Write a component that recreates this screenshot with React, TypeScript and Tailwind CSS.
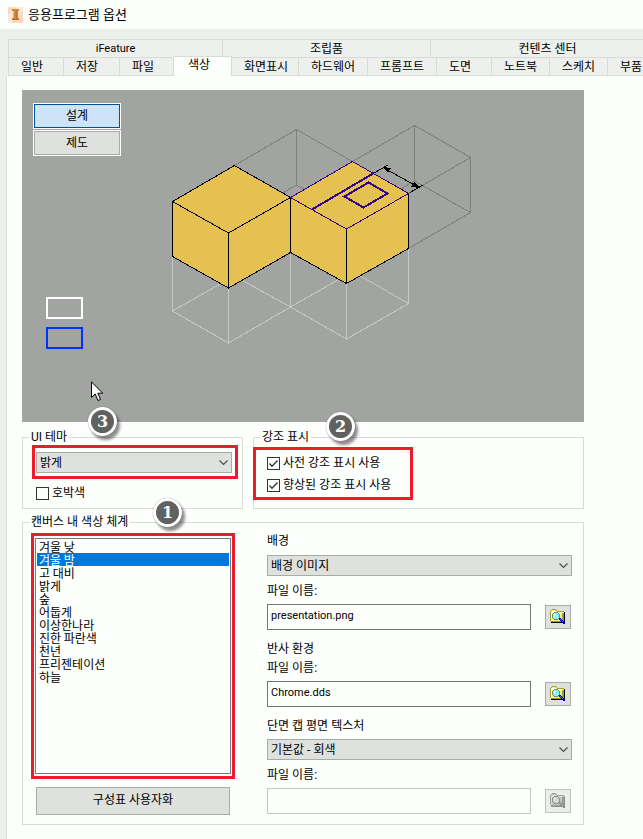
import { ReactNode, useState } from 'react';
import { clsx } from 'clsx';

const groupTabs = [
  { label: 'iFeature', width: 'w-[214px]' },
  { label: '조립품', width: 'w-[208px]' },
  { label: '컨텐츠 센터', width: 'w-[234px]' },
];

const tabs = [
  { label: '일반', width: 'w-[55px]' },
  { label: '저장', width: 'w-[56px]' },
  { label: '파일', width: 'w-[54px]' },
  { label: '색상', width: 'w-[58px]' },
  { label: '화면표시', width: 'w-[67px]' },
  { label: '하드웨어', width: 'w-[69px]' },
  { label: '프롬프트', width: 'w-[69px]' },
  { label: '도면', width: 'w-[55px]' },
  { label: '노트북', width: 'w-[58px]' },
  { label: '스케치', width: 'w-[58px]' },
  { label: '부품', width: 'w-[56px]' },
];

const schemes = [
  '겨울 낮',
  '겨울 밤',
  '고 대비',
  '밝게',
  '숲',
  '어둡게',
  '이상한나라',
  '진한 파란색',
  '천년',
  '프리젠테이션',
  '하늘',
];

function AppLogo() {
  return (
    <svg width="16" height="16" viewBox="0 0 16 16" aria-hidden="true">
      <rect width="15" height="16" rx="1" fill="#fad9c0" />
      <path d="M0 8 L8 0 H15 V3 L3 16 H0Z" fill="#fce8d9" />
      <path d="M4 2H11V4H9.500V11H11V13H4V11H5.500V4H4Z" fill="#d98232" />
      <path d="M8.500 4H9.500V11H8.500Z" fill="#a85a1c" />
      <path d="M4 12H11V13H4Z" fill="#b9651f" />
    </svg>
  );
}

function Badge({ value, className }: { value: number; className: string }) {
  return (
    <span
      className={clsx(
        'absolute z-10 flex h-[29px] w-[29px] items-center justify-center rounded-full border-[3px] border-white bg-[#60625f] font-["DejaVu_Serif",serif] text-base leading-4 font-bold text-white shadow-[3px_4px_3px_rgba(0,0,0,0.45),0_0_1px_rgba(0,0,0,0.5)]',
        className,
      )}
    >
      {value}
    </span>
  );
}

function FolderIcon({ muted }: { muted?: boolean }) {
  const folder = muted ? '#c4c6c4' : '#fbf56a';
  const light = muted ? '#dddfdd' : '#fffff0';
  const shade = muted ? '#9c9e9c' : '#a09a28';
  const edge = muted ? '#8e908e' : '#000000';
  const lens = muted ? '#d0d2d0' : '#7df4fa';
  const rim = muted ? '#8e908e' : '#5d8f93';
  const handle = muted ? '#8a8c8a' : '#0000a8';
  return (
    <svg width="16" height="16" viewBox="0 0 16 16" shapeRendering="crispEdges" aria-hidden="true">
      <path d="M1 2H2V1H6V2H7V3H14V13H1Z" fill={folder} />
      <path d="M2 2H6V3H13V4H2V12H1V2Z" fill={light} />
      <path d="M0 2H1V12H0ZM1 1H2V2H1ZM2 0H6V1H2ZM6 1H7V2H6ZM7 2H14V3H7Z" fill={shade} />
      <path d="M12 4H14V13H12ZM1 12H13V13H1Z" fill={shade} />
      <path d="M14 3H15V14H14ZM1 13H14V14H1Z" fill={edge} />
      <path d="M4 4H8V5H9V9H8V10H4V9H3V5H4Z" fill={lens} />
      <path d="M4 5H6V6H5V8H4ZM7 8H8V9H7Z" fill={muted ? '#f0f0f0' : '#ffffff'} />
      <path
        d="M4 3H8V4H4ZM3 4H4V5H3ZM8 4H9V5H8ZM2 5H3V9H2ZM9 5H10V9H9ZM3 9H4V10H3ZM4 10H8V11H4ZM8 9H9V10H8Z"
        fill={rim}
      />
      <path d="M9 9H11V10H12V11H13V12H14V13H15V15H13V14H12V13H11V12H10V11H9Z" fill={handle} />
      <path d="M10 10H11V11H12V12H13V13H12V12H11V11H10Z" fill={muted ? '#b0b2b0' : '#4a6cff'} />
    </svg>
  );
}

function CubePreview() {
  return (
    <svg
      width="300"
      height="220"
      viewBox="0 0 300 220"
      fill="none"
      shapeRendering="crispEdges"
      className="mt-[35px] shrink-0"
      aria-hidden="true"
    >
      {/* hidden edges behind the solids */}
      <g stroke="#7f817f">
        <path d="M62.500 40.500L124.500 4.500L180.500 36.500L242.500 .5L298.500 32.500L236.500 68.500" />
        <path d="M124.500 4.500V60L62.500 96M124.500 60L180.500 92" />
        <path d="M242.500 .5V56L180.500 92M242.500 56L298.500 87.500V32.500M298.500 87.500L236.500 123.500" />
      </g>
      <g stroke="#c6c8c6">
        <path d="M.5 131V186L56.500 218L118.500 182L174.500 214L236.500 178.500V123" />
        <path d="M56.500 163V218M118.500 127V182M174.500 158V214" />
        <path d="M.5 186L62.500 151L118.500 182L180.500 146.500L236.500 178.500" />
      </g>

      <g fill="#e5c152" stroke="#000">
        <path d="M.5 76.500L62.500 40.500L118.500 72.500V127.500L56.500 163L.5 131.500Z" />
        <path d="M118.500 72.500L180.500 36.500L236.500 68.500V123.500L174.500 158.500L118.500 127.500Z" />
      </g>
      <path d="M.5 76.500L56.500 108L118.500 72.500M56.500 108V163M174.500 104V158" stroke="#000" />
      <path d="M118.500 72.500L180.500 36.500L236.500 68.500L174.500 104Z" stroke="#e5c152" />
      <path d="M118.500 72.500L180.500 36.500L236.500 68.500L174.500 104Z" stroke="#330088" />

      <g stroke="#330088" strokeWidth="2">
        <path d="M140 84.500L202 48" />
        <path d="M196.500 57.500L215.500 68.500L191.500 82.500L172.500 71.500Z" />
      </g>

      <path d="M202 48L216 40M238 67.500L251 60M211 42.500L247 62.500" stroke="#000" />
      <path d="M211 42L219 43L216 48ZM248 63L239 62L242 57Z" fill="#000" />
    </svg>
  );
}

function Cursor() {
  return (
    <svg width="13" height="21" viewBox="0 0 13 21" className="absolute top-[291px] left-[69px]" aria-hidden="true">
      <path d="M.5 1V16.500L4.200 13L7 19.500L9.500 18.400L6.800 12.200H11.800Z" fill="#fff" stroke="#000" />
    </svg>
  );
}

function Group({ title, className, children }: { title: string; className?: string; children: ReactNode }) {
  return (
    <fieldset className={clsx('h-full min-w-0 border border-[#d9dbd9]', className)}>
      <legend className="ml-1.5 px-0.5 leading-4">{title}</legend>
      {children}
    </fieldset>
  );
}

function Dropdown({ id, label, options }: { id: string; label?: string; options: string[] }) {
  return (
    <div className="relative">
      <select
        id={id}
        aria-label={label}
        className="block h-[21px] w-full appearance-none border border-[#a9aba9] bg-[#dfe1df] pr-6 pl-[3px] leading-[18px] outline-none"
      >
        {options.map((o) => (
          <option key={o}>{o}</option>
        ))}
      </select>
      <svg
        width="9"
        height="6"
        viewBox="0 0 9 6"
        fill="none"
        stroke="#4c4e4c"
        className="pointer-events-none absolute top-2 right-1"
        aria-hidden="true"
      >
        <path d="M.5 .5L4.500 4.500L8.500 .5" strokeWidth="1.200" />
      </svg>
    </div>
  );
}

function CheckOption({ label, initial }: { label: string; initial: boolean }) {
  const [checked, setChecked] = useState(initial);
  return (
    <label className="flex h-[13px] items-center gap-[3px] leading-[13px]">
      <span className="relative h-[13px] w-[13px] shrink-0">
        <input
          type="checkbox"
          checked={checked}
          onChange={(e) => setChecked(e.target.checked)}
          className="block h-[13px] w-[13px] appearance-none border border-[#333533] bg-[#fdfffd]"
        />
        {checked && (
          <svg
            width="13"
            height="13"
            viewBox="0 0 13 13"
            fill="none"
            stroke="#333533"
            className="pointer-events-none absolute inset-0"
            aria-hidden="true"
          >
            <path d="M2.500 6.500L5 9.200L10.500 3.500" strokeWidth="1.300" />
          </svg>
        )}
      </span>
      {label}
    </label>
  );
}

function FileField({ id, value, disabled }: { id: string; value: string; disabled?: boolean }) {
  return (
    <>
      <label htmlFor={id} className="leading-4">
        파일 이름:
      </label>
      <div className="mt-[5px] flex items-center gap-3.5 pr-px">
        <input
          id={id}
          type="text"
          defaultValue={value}
          disabled={disabled}
          className={clsx(
            'h-[26px] min-w-0 flex-1 border bg-[#fdfffd] px-[3px] pb-1 text-[11px] outline-none',
            disabled ? 'border-[#c6c8c6]' : 'border-[#747674]',
          )}
        />
        <button
          type="button"
          disabled={disabled}
          aria-label="찾아보기"
          className={clsx(
            'flex h-6 w-[26px] items-center justify-center border',
            disabled ? 'border-[#bfc1bf] bg-[#eceeec]' : 'border-[#a9aba9] bg-[#dfe1df]',
          )}
        >
          <FolderIcon muted={disabled} />
        </button>
      </div>
    </>
  );
}

export default function App() {
  const [activeTab, setActiveTab] = useState('색상');
  const [mode, setMode] = useState('설계');
  const [scheme, setScheme] = useState('겨울 밤');

  return (
    <div className="flex min-h-screen flex-col overflow-hidden bg-[#eef0ee] font-[Roboto,'Noto_Sans_CJK_KR',sans-serif] text-xs text-black">
      <header className="flex h-[29px] items-center gap-1 bg-[#fdfffd] pl-2">
        <AppLogo />
        <h1 className="text-[13px] leading-4">응용프로그램 옵션</h1>
      </header>

      <nav className="pt-2.5 pl-2">
        <div className="flex h-[18px] border-t border-l border-[#d9dbd9]">
          {groupTabs.map((t) => (
            <button
              key={t.label}
              type="button"
              className={clsx('shrink-0 border-r border-[#d9dbd9] leading-4', t.width, t.label === 'iFeature' && 'text-[11px]')}
            >
              {t.label}
            </button>
          ))}
        </div>
        <div className="flex h-[19px] border-y border-l border-[#d9dbd9]">
          {tabs.map((t) => (
            <button
              key={t.label}
              type="button"
              onClick={() => setActiveTab(t.label)}
              className={clsx(
                'shrink-0 border-r border-[#d9dbd9] text-left leading-4',
                t.width,
                activeTab === t.label
                  ? 'z-10 -mt-0.5 -mb-px border-t bg-[#fdfffd] pb-1 pl-3.5'
                  : 'pl-3',
              )}
            >
              {t.label}
            </button>
          ))}
        </div>
      </nav>

      <main className="ml-1.5 flex-1 border-l border-[#d9dbd9] bg-[#fdfffd] pt-3.5 pr-[59px] pb-3.5 pl-[15px]">
        <section className="relative flex h-[332px] bg-[#a2a4a1]">
          <div className="w-[150px] shrink-0 pt-[13px] pl-[11px]">
            <div className="flex w-[88px] flex-col gap-px">
              {['설계', '제도'].map((m) => (
                <button
                  key={m}
                  type="button"
                  onClick={() => setMode(m)}
                  className={clsx(
                    'h-[26px] border border-white pb-px',
                    mode === m
                      ? 'bg-[#cde3f7] shadow-[inset_0_0_0_1px_#00549b]'
                      : 'bg-[#dfe1df] shadow-[inset_0_0_0_1px_#a9aba9]',
                  )}
                >
                  {m}
                </button>
              ))}
            </div>
            <div className="mt-[141px] ml-[13px] flex w-[37px] flex-col gap-2">
              <div className="h-[22px] border-2 border-white" />
              <div className="h-[22px] border-2 border-[#0032ff]" />
            </div>
          </div>
          <CubePreview />
          <Cursor />
        </section>

        <div className="mt-[7px] flex gap-2.5">
          <div className="relative w-[221px] shrink-0">
            <Group title="UI 테마" className="pb-2">
              <div className="mr-1 ml-[9px] border-[3px] border-[#ee1c2a] pt-1 pr-[3px] pb-[3px] pl-px">
                <Dropdown id="theme" label="UI 테마" options={['밝게', '어둡게']} />
              </div>
              <div className="mt-2 ml-[13px]">
                <CheckOption label="호박색" initial={false} />
              </div>
            </Group>
            <Badge value={3} className="-top-[22px] left-[66px]" />
          </div>

          <div className="relative flex-1">
            <Group title="강조 표시">
              <div className="mt-0.5 -ml-px flex w-[160px] flex-col gap-[9px] border-[3px] border-[#ee1c2a] pt-[7px] pb-[5px] pl-[11px]">
                <CheckOption label="사전 강조 표시 사용" initial />
                <CheckOption label="향상된 강조 표시 사용" initial />
              </div>
            </Group>
            <Badge value={2} className="-top-[17px] left-[73px]" />
          </div>
        </div>

        <div className="relative mt-[5px]">
          <Group title="캔버스 내 색상 체계" className="pb-[9px]">
            <div className="flex gap-8 pt-[3px] pr-[11px] pl-2">
              <div className="flex w-[204px] shrink-0 flex-col">
                <div className="flex h-[246px] border-[3px] border-[#ee1c2a] px-px py-0.5">
                  <select
                    size={18}
                    aria-label="캔버스 내 색상 체계"
                    value={scheme}
                    onChange={(e) => setScheme(e.target.value)}
                    className="h-full w-full overflow-hidden border border-[#777c84] bg-[#fdfffd] p-px outline-none"
                  >
                    {schemes.map((s) => (
                      <option
                        key={s}
                        className="flex h-[13px] min-h-0 items-center overflow-visible px-0.5 py-0 font-['Noto_Sans_CJK_KR',sans-serif] checked:bg-[#0078d7] checked:text-white"
                      >
                        {s}
                      </option>
                    ))}
                  </select>
                </div>
                <button
                  type="button"
                  className="mt-2 mr-[5px] ml-[5px] h-7 border border-[#a9aba9] bg-[#dfe1df] pb-0.5"
                >
                  구성표 사용자화
                </button>
              </div>

              <div className="flex min-w-0 flex-1 flex-col">
                <label htmlFor="background" className="mb-1.5 leading-4">
                  배경
                </label>
                <Dropdown id="background" options={['배경 이미지', '단색', '그라데이션']} />
                <div className="mt-[7px] flex flex-col">
                  <FileField id="background-file" value="presentation.png" />
                </div>

                <h2 className="mt-[11px] leading-4">반사 환경</h2>
                <div className="mt-[3px] flex flex-col">
                  <FileField id="reflection-file" value="Chrome.dds" />
                </div>

                <label htmlFor="texture" className="mt-[11px] mb-[5px] leading-4">
                  단면 캡 평면 텍스처
                </label>
                <Dropdown id="texture" options={['기본값 - 회색']} />
                <div className="mt-[7px] flex flex-col">
                  <FileField id="texture-file" value="" disabled />
                </div>
              </div>
            </div>
          </Group>
          <Badge value={1} className="-top-[16px] left-[131px]" />
        </div>
      </main>
    </div>
  );
}
